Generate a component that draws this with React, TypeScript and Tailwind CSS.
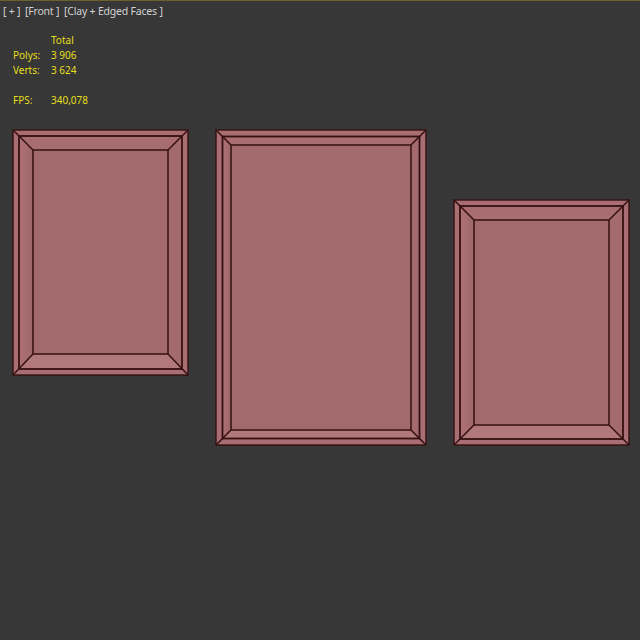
const LINE = "#35100f";

function Frame({ w, h, a, b }: { w: number; h: number; a: number; b: [number, number, number, number] }) {
  // a: outer to second rect inset; b: inner rect inset (left, top, right, bottom)
  const [l, t, r, bt] = b;
  const sx = a;
  const sy = a;
  const ex = w - a;
  const ey = h - a;
  const ir = w - r;
  const ib = h - bt;
  return (
    <svg width={w} height={h} className="block shrink-0 overflow-visible">
      <defs>
        <linearGradient id={`side${w}${h}${l}`} x1="0" y1="0" x2="1" y2="0">
          <stop offset="0" stopColor="#ae7276" />
          <stop offset="1" stopColor="#9e676b" />
        </linearGradient>
      </defs>
      <rect x={0} y={0} width={w} height={h} fill="#a86e73" />
      <polygon points={`${sx},${sy} ${l},${t} ${l},${ib} ${sx},${ey}`} fill={`url(#side${w}${h}${l})`} />
      <polygon points={`${sx},${sy} ${ex},${sy} ${ir},${t} ${l},${t}`} fill="#a76d71" />
      <polygon points={`${ex},${sy} ${ex},${ey} ${ir},${ib} ${ir},${t}`} fill="#a46b6f" />
      <polygon points={`${sx},${ey} ${ex},${ey} ${ir},${ib} ${l},${ib}`} fill="#b1797b" />
      <rect x={l} y={t} width={w - l - r} height={h - t - bt} fill="#a26a6d" />
      <g stroke={LINE} fill="none" strokeWidth="1.5">
        <rect x={0} y={0} width={w} height={h} strokeWidth="1.4" />
        <rect x={sx} y={sy} width={ex - sx} height={ey - sy} strokeWidth="1.8" />
        <rect x={l} y={t} width={w - l - r} height={h - t - bt} />
        <path d={`M0 0L${l} ${t}M${w} 0L${ir} ${t}M0 ${h}L${l} ${ib}M${w} ${h}L${ir} ${ib}`} />
      </g>
    </svg>
  );
}

function Stat({ label, value }: { label: string; value: string }) {
  return (
    <div className="flex h-[15px] items-center">
      <span className="w-[38px]">{label}</span>
      <span>{value}</span>
    </div>
  );
}

export default function App() {
  return (
    <div className="h-[640px] w-[640px] overflow-hidden border-t border-[#6a5f2e] bg-[#373737] font-['Noto_Sans',sans-serif] text-[10px]">
      <div className="ml-[3px] mt-[3px] flex h-[15px] items-center text-[10.5px] tracking-[-0.2px] text-[#d2d2d2]">
        <span className="w-[22px]">[ + ]</span>
        <span className="w-[39px]">[Front ]</span>
        <span>[Clay + Edged Faces ]</span>
      </div>
      <div className="ml-[13px] mt-[14px] text-[#e6df1a]">
        <Stat label="" value="Total" />
        <Stat label="Polys:" value="3 906" />
        <Stat label="Verts:" value="3 624" />
        <div className="h-[15px]" />
        <Stat label="FPS:" value="340,078" />
      </div>
      <div className="ml-[13px] mt-[22px] flex items-start">
        <Frame w={175} h={245} a={6} b={[20, 20, 20, 21]} />
        <div className="ml-[28px]">
          <Frame w={210} h={315} a={6.5} b={[15, 15, 15, 15]} />
        </div>
        <div className="ml-[28px] mt-[70px]">
          <Frame w={175} h={245} a={6} b={[20, 20, 20, 20]} />
        </div>
      </div>
    </div>
  );
}
